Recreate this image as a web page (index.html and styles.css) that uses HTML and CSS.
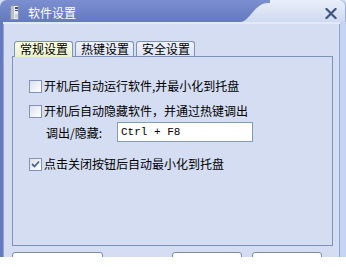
FILE: index.html
```html
<!DOCTYPE html>
<html>
<head>
<meta charset="utf-8">
<link rel="stylesheet" href="styles.css">
</head>
<body>
<div class="window">
  <div class="titlebar">
    <div class="tb-dark">
      <svg class="app-icon" width="9" height="15" viewBox="0 0 9 15">
        <rect x="0.5" y="0.5" width="8" height="14" fill="#e9ecf2" stroke="#8a93a6"/>
        <rect x="1" y="1" width="3" height="13" fill="#b8c0d0"/>
        <rect x="5" y="2" width="3" height="2" fill="#3d4f7a"/>
        <rect x="5" y="5" width="3" height="1" fill="#3d4f7a"/>
        <rect x="5" y="9" width="3" height="4" fill="#c9cfdb"/>
      </svg>
      <span class="title">软件设置</span>
    </div>
    <svg class="tb-curve" width="30" height="22" viewBox="0 0 30 22" preserveAspectRatio="none">
      <defs>
        <linearGradient id="lg" x1="0" y1="0" x2="0" y2="1">
          <stop offset="0" stop-color="#e9eef9"/>
          <stop offset="1" stop-color="#cfd9f0"/>
        </linearGradient>
        <linearGradient id="dg" x1="0" y1="0" x2="0" y2="1">
          <stop offset="0" stop-color="#7b8fd0"/>
          <stop offset="1" stop-color="#6479bf"/>
        </linearGradient>
      </defs>
      <rect width="30" height="22" fill="url(#lg)"/>
      <path d="M0 0 H30 V3 H28 C14 3 10 22 0 22 Z" fill="url(#dg)"/>
    </svg>
    <div class="tb-light">
      <svg class="close" width="12" height="11" viewBox="0 0 12 11">
        <path d="M1.5 1 L10.5 10 M10.5 1 L1.5 10" stroke="#3f5681" stroke-width="2.2" stroke-linecap="square"/>
      </svg>
    </div>
  </div>
  <div class="frame-line"></div>
  <div class="main">
    <div class="tabs">
      <div class="tab active">常规设置</div>
      <div class="tab">热键设置</div>
      <div class="tab">安全设置</div>
    </div>
    <div class="panel">
      <div class="row r1">
        <span class="cb"></span><span class="label">开机后自动运行软件,并最小化到托盘</span>
      </div>
      <div class="row r2">
        <span class="cb"></span><span class="label">开机后自动隐藏软件，并通过热键调出</span>
      </div>
      <div class="row r3">
        <span class="key-label">调出/隐藏:</span>
        <div class="input">Ctrl + F8</div>
      </div>
      <div class="row r4">
        <span class="cb checked"><svg width="11" height="11" viewBox="0 0 11 11"><path d="M2 5 L4.5 7.5 L9 2.5" fill="none" stroke="#4c6396" stroke-width="1.8"/></svg></span><span class="label">点击关闭按钮后自动最小化到托盘</span>
      </div>
    </div>
    <div class="buttons">
      <div class="btn wide"></div>
      <div class="btn-group">
        <div class="btn"></div>
        <div class="btn"></div>
      </div>
    </div>
  </div>
</div>
</body>
</html>
```
FILE: styles.css
```css
html, body {
  margin: 0;
  padding: 0;
  background: #ffffff;
}
body {
  font-family: "Noto Sans CJK SC", "Noto Sans", sans-serif;
  font-size: 12px;
  color: #000;
}
.window {
  width: 346px;
  height: 257px;
  display: flex;
  flex-direction: column;
  overflow: hidden;
  background: #d4ddf2;
}
.titlebar {
  display: flex;
  height: 22px;
  flex: none;
}
.tb-dark {
  width: 240px;
  flex: none;
  background: linear-gradient(#7b8fd0, #6479bf);
  border-top-left-radius: 7px;
  display: flex;
  align-items: center;
  padding-left: 10px;
  box-sizing: border-box;
}
.app-icon {
  flex: none;
  margin-top: 2px;
}
.title {
  margin-left: 9px;
  color: #ffffff;
  font-size: 12px;
  line-height: 14px;
  margin-top: 3px;
}
.tb-curve {
  flex: none;
  display: block;
}
.tb-light {
  flex: 1;
  background: linear-gradient(#e9eef9, #cfd9f0);
  border-top-right-radius: 6px;
  display: flex;
  justify-content: flex-end;
  align-items: center;
  padding-right: 9px;
  box-shadow: inset -1px 0 0 #9eb0dc;
}
.close {
  margin-top: 4px;
}
.frame-line {
  height: 2px;
  flex: none;
  background: #e3e9f7;
  border-left: 3px solid #6479bf;
  border-right: 6px solid #c6d3f1;
}
.main {
  flex: 1;
  display: flex;
  flex-direction: column;
  border-left: 3px solid #6479bf;
  border-right: 6px solid #c6d3f1;
  box-shadow: inset -1px 0 0 #8fa3d4, inset 1px 0 0 #93a4d6;
  padding: 17px 7px 0 9px;
}
.tabs {
  display: flex;
  gap: 2px;
  margin-left: 2px;
  height: 15px;
  position: relative;
  z-index: 1;
}
.tab {
  width: 59px;
  box-sizing: border-box;
  border: 1px solid #7f93b8;
  border-bottom: none;
  border-radius: 3px 3px 0 0;
  padding: 0 5px;
  line-height: 14px;
  font-size: 12px;
  background: linear-gradient(#eef2fa, #dde4f4);
  white-space: nowrap;
}
.tab.active {
  height: 16px;
  background: linear-gradient(#fcfee9, #e8f1cd);
}
.panel {
  height: 190px;
  box-sizing: border-box;
  border: 1px solid #7f93b8;
  padding: 19px 0 0 16px;
  display: flex;
  flex-direction: column;
  flex: none;
}
.row {
  display: flex;
  align-items: center;
  height: 20px;
}
.r2 { margin-top: 5px; }
.r3 { margin-top: 1px; padding-left: 17px; }
.r4 { margin-top: 12px; }
.cb {
  width: 13px;
  height: 13px;
  box-sizing: border-box;
  border: 1px solid #8094bb;
  background: linear-gradient(135deg, #dce1eb, #ffffff);
  flex: none;
  display: flex;
  align-items: center;
  justify-content: center;
}
.label {
  margin-left: 2px;
  white-space: nowrap;
  line-height: 14px;
}
.key-label {
  width: 71px;
  flex: none;
  white-space: nowrap;
}
.input {
  width: 136px;
  height: 20px;
  box-sizing: border-box;
  border: 1px solid #7f9db9;
  background: #ffffff;
  font-family: "Liberation Mono", monospace;
  font-size: 11px;
  line-height: 18px;
  padding-left: 3px;
  white-space: pre;
}
.buttons {
  display: flex;
  justify-content: space-between;
  margin-top: 6px;
  padding-right: 11px;
}
.btn-group {
  display: flex;
  gap: 10px;
}
.btn {
  width: 70px;
  height: 22px;
  box-sizing: border-box;
  border: 1px solid #7a8aa8;
  border-radius: 3px;
  background: #ffffff;
}
.btn.wide {
  width: 91px;
}
```
